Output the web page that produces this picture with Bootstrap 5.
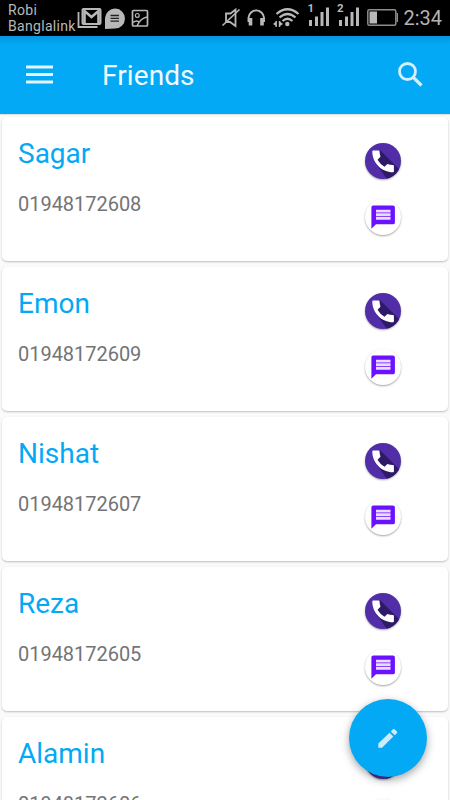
<!DOCTYPE html>
<html lang="en">
<head>
<meta charset="utf-8">
<meta name="viewport" content="width=device-width, initial-scale=1">
<title>Friends</title>
<link href="https://cdn.jsdelivr.net/npm/bootstrap@5.3.0/dist/css/bootstrap.min.css" rel="stylesheet">
<style>
body{font-family:Roboto,"Liberation Sans",sans-serif;background:#fafafa;height:800px;overflow:hidden}
svg{display:block;flex:none}
.status{height:36px;background:#000;color:#b8b8b8}
.carrier{font-size:14px;line-height:16px;width:69px;padding-top:2px;letter-spacing:.32px}
.clock{font-size:20px;line-height:37px;color:#b4b4b4}
.appbar{height:78px;background:linear-gradient(#0398e0,#03a9f4 9px);background-color:#03a9f4;box-shadow:0 1px 1px rgba(0,0,0,.1)}
.title{font-size:28px;line-height:36px;color:#f2faff;margin-left:46px;padding-top:2px;letter-spacing:.1px}
.search{margin-right:25px}
.list-area{padding:3px 2px 0;gap:6px;height:686px}
.contact{height:144px;border-radius:5px;background:#fff;box-shadow:0 1px 2px rgba(0,0,0,.24)}
.contact-text{padding:20px 0 0 16px}
.contact-actions{padding:26px 47.5px 0 0;gap:20px}
.name{font-size:28px;line-height:34px;color:#03a9f4}
.phone{font-size:20px;line-height:24px;color:#747474;margin-top:21px;letter-spacing:-.03px}
.round{width:36px;height:36px;box-shadow:0 1px 2px rgba(0,0,0,.36)}
.call{background:#512da8}
.fab{width:78px;height:78px;right:23px;top:699px;background:#03a9f4;box-shadow:0 3px 9px rgba(0,0,0,.36)}
</style>
</head>
<body>
<svg width="0" height="0" class="position-absolute">
<symbol id="phone" viewBox="0 0 36 36"><path d="M15 7 36 28V36H22L12 22Z" fill="#2e1a66"/><path d="M7.3 8.2Q7.3 7.4 8.1 7.4H13.6Q14.5 7.4 14.5 8.4Q14.7 11.4 15.5 13.8L12.5 16.8Q15.1 21.3 19.5 23.8L22.4 20.9Q24.9 21.8 28 22Q28.9 22 28.9 22.9V28.3Q28.9 29.2 28 29.2C16.5 29.2 7.3 19.7 7.3 8.2Z" fill="#fff"/></symbol>
<symbol id="chat" viewBox="0 0 36 36"><path d="M8.2 6.5H28Q29.9 6.5 29.9 8.3V23.4Q29.9 25.3 28 25.3H11L6.4 29.8V8.3Q6.4 6.5 8.2 6.5Z" fill="#6a11ff"/><path d="M11 10.8H25.5V13.5H11ZM11 14.3H25.5V17.2H11ZM11 18H25.5V20.8H11Z" fill="#e8dcff"/></symbol>
</svg>

<header>
<div class="status d-flex ps-2">
  <div class="carrier">Robi<br>Banglalink</div>
  <svg width="75" height="36" viewBox="77 0 75 36" fill="none" stroke="#b8b8b8">
    <rect x="82.5" y="9" width="18" height="15" rx="1" stroke-width="2"/><path d="M84.5 23V11L91.5 17 98.5 11V23" stroke-width="2.6"/><path d="M78.5 12V27H97.5" stroke-width="1.8"/>
    <path d="M105 29V18A10 10 0 1 1 115 28.6Z" fill="#b8b8b8" stroke="none"/><path d="M110.5 15.5H119M110.5 18.3H119M110.5 21.2H119" stroke="#222" stroke-width="1.3"/>
    <rect x="132.5" y="10.5" width="15" height="15.5" rx="1" stroke-width="1.7"/><circle cx="137.3" cy="15.4" r="1.9" stroke-width="1.2"/><path d="M133 22.5Q137 19.5 139.5 22.5M137 26Q140 18.5 147 17" stroke-width="1.5"/>
  </svg>
  <svg class="ms-auto" width="180" height="36" viewBox="219 0 180 36" fill="none" stroke="#b8b8b8">
    <path d="M226 13.5V22H230L235.5 26V9.5L230.5 13.5Z" stroke-width="1.8"/><path d="M222.5 25.5 239.5 9.5" stroke-width="1.7"/>
    <path d="M248.5 22V17.5A7.8 8 0 0 1 264 17.5V22" stroke-width="1.9"/><path d="M250.5 18V25.5M262 18V25.5" stroke-width="3.6"/>
    <path d="M276.5 14Q287.5 4.5 298.5 14M279.5 17.5Q287.5 10.5 295.5 17.5M282.5 21Q287.5 16.5 292.5 21" stroke-width="2.2"/><circle cx="287.3" cy="24" r="2.2" fill="#b8b8b8" stroke="none"/><path d="M276.2 21V27M279.5 21V27" stroke-width="1.4"/><path d="M273 24 276 21.5V26ZM283 24 280 21.5V26Z" fill="#b8b8b8" stroke="none"/>
    <path d="M310.5 20V26M316.5 16.5V26M322 12V26M327.5 7.5V26M340.5 20V26M346.5 16.5V26M352 12V26M357.5 7.5V26" stroke-width="3"/>
    <g fill="#b8b8b8" stroke="none" font-family="Roboto,sans-serif" font-size="11.5" font-weight="700"><text x="307.5" y="11.5">1</text><text x="337" y="11.5">2</text></g>
    <rect x="367.8" y="9.8" width="28" height="15.4" rx="1.5" stroke="#8c8c8c" stroke-width="1.5"/><path d="M369.5 11.5H377V23.5H369.5Z" fill="#b8b8b8" stroke="none"/><path d="M397.3 13V22" stroke="#8c8c8c" stroke-width="1.5"/>
  </svg>
  <div class="clock ms-1 me-2">2:34</div>
</div>
<nav class="appbar position-relative d-flex align-items-center">
  <svg class="ms-4" width="32" height="24" viewBox="0 0 32 24"><path d="M2 4H29M2 11.5H29M2 19H29" stroke="#e4f5ff" stroke-width="2.8"/></svg>
  <h1 class="title fw-normal mb-0">Friends</h1>
  <svg class="search ms-auto" width="28" height="28" viewBox="0 0 28 28" fill="none" stroke="#d4effd"><circle cx="10.5" cy="10.5" r="8" stroke-width="2.8"/><path d="M16.3 16.3 24.5 24.5" stroke-width="3.2"/></svg>
</nav>
</header>

<main class="list-area d-flex flex-column overflow-hidden">
  <article class="contact flex-shrink-0 d-flex justify-content-between"><div class="contact-text"><h2 class="name fw-normal mb-0">Sagar</h2><div class="phone">01948172608</div></div><div class="contact-actions d-flex flex-column"><a class="round call rounded-circle overflow-hidden"><svg width="36" height="36"><use href="#phone"/></svg></a><a class="round rounded-circle"><svg width="36" height="36"><use href="#chat"/></svg></a></div></article>
  <article class="contact flex-shrink-0 d-flex justify-content-between"><div class="contact-text"><h2 class="name fw-normal mb-0">Emon</h2><div class="phone">01948172609</div></div><div class="contact-actions d-flex flex-column"><a class="round call rounded-circle overflow-hidden"><svg width="36" height="36"><use href="#phone"/></svg></a><a class="round rounded-circle"><svg width="36" height="36"><use href="#chat"/></svg></a></div></article>
  <article class="contact flex-shrink-0 d-flex justify-content-between"><div class="contact-text"><h2 class="name fw-normal mb-0">Nishat</h2><div class="phone">01948172607</div></div><div class="contact-actions d-flex flex-column"><a class="round call rounded-circle overflow-hidden"><svg width="36" height="36"><use href="#phone"/></svg></a><a class="round rounded-circle"><svg width="36" height="36"><use href="#chat"/></svg></a></div></article>
  <article class="contact flex-shrink-0 d-flex justify-content-between"><div class="contact-text"><h2 class="name fw-normal mb-0">Reza</h2><div class="phone">01948172605</div></div><div class="contact-actions d-flex flex-column"><a class="round call rounded-circle overflow-hidden"><svg width="36" height="36"><use href="#phone"/></svg></a><a class="round rounded-circle"><svg width="36" height="36"><use href="#chat"/></svg></a></div></article>
  <article class="contact flex-shrink-0 d-flex justify-content-between"><div class="contact-text"><h2 class="name fw-normal mb-0">Alamin</h2><div class="phone">01948172606</div></div><div class="contact-actions d-flex flex-column"><a class="round call rounded-circle overflow-hidden"><svg width="36" height="36"><use href="#phone"/></svg></a><a class="round rounded-circle"><svg width="36" height="36"><use href="#chat"/></svg></a></div></article>
</main>

<button class="fab position-fixed rounded-circle border-0 p-0 d-flex align-items-center justify-content-center" aria-label="Edit">
  <svg width="24" height="24" viewBox="0 0 24 24" fill="#c9edff"><path d="M2.3 17.5 13.5 6.7 17.3 10.5 6 21.7H2.3ZM14.8 5.4 17 3.3Q17.8 2.6 18.6 3.3L20.9 5.6Q21.6 6.4 20.9 7.2L18.7 9.3Z"/></svg>
</button>
<script src="https://cdn.jsdelivr.net/npm/bootstrap@5.3.0/dist/js/bootstrap.bundle.min.js"></script>
</body>
</html>
